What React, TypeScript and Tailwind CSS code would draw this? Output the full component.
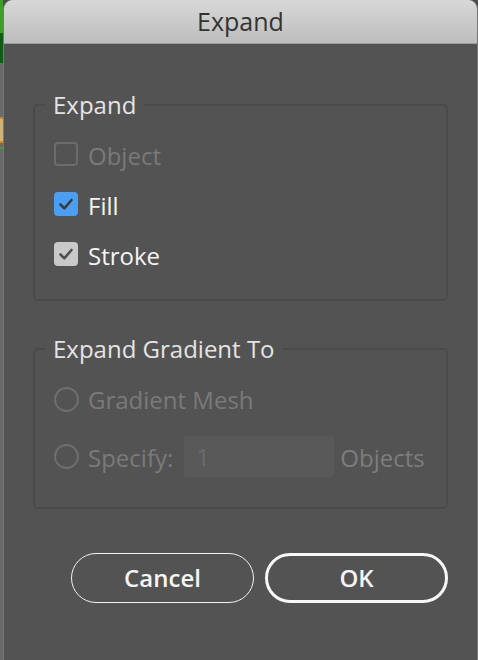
import React from 'react'

const font = { fontFamily: '"Open Sans", "Noto Sans", sans-serif' }

function CheckMark({ color }: { color: string }) {
  return (
    <svg viewBox="0 0 24 24" className="h-[24px] w-[24px]">
      <path d="M6.5 12.5l3.8 3.8 7.2-8.3" fill="none" stroke={color} strokeWidth="2.6" strokeLinecap="round" strokeLinejoin="round" />
    </svg>
  )
}

function CheckRow({ label, state }: { label: string; state: 'disabled' | 'blue' | 'gray' }) {
  return (
    <div className="flex h-[24px] items-center gap-[10px]">
      {state === 'disabled' && (
        <div className="h-[24px] w-[24px] rounded-[4px] border-2 border-[#6c6c6c]" />
      )}
      {state === 'blue' && (
        <div className="h-[24px] w-[24px] rounded-[4px] bg-[#4b9ff3]">
          <CheckMark color="#3b3b3b" />
        </div>
      )}
      {state === 'gray' && (
        <div className="h-[24px] w-[24px] rounded-[4px] bg-[#c9c9c9]">
          <CheckMark color="#505050" />
        </div>
      )}
      <span className={`pt-[3px] text-[24px] font-medium leading-none ${state === 'disabled' ? 'text-[#7a7a7a]' : 'text-[#f4f4f4]'}`}>
        {label}
      </span>
    </div>
  )
}

function Radio() {
  return <div className="h-[25px] w-[25px] shrink-0 rounded-full border-2 border-[#6e6e6e]" />
}

export default function App() {
  return (
    <div className="flex h-[660px] w-[478px] overflow-hidden bg-[#4e4e4e]" style={font}>
      {/* desktop behind the dialog */}
      <div className="flex w-[3px] flex-col">
        <div className="h-[33px] bg-[#3f9e2a]" />
        <div className="h-[30px] bg-[#0e5c16]" />
        <div className="h-[54px] bg-[#6a6a6a]" />
        <div className="h-[2px] bg-[#d88a1c]" />
        <div className="h-[22px] bg-[#cfb277]" />
        <div className="h-[2px] bg-[#d88a1c]" />
        <div className="h-[4px] bg-[#6a6a6a]" />
        <div className="h-[2px] bg-[#4c9a2a]" />
        <div className="flex-1 bg-[#6a6a6a]" />
      </div>

      <div className="flex flex-1 flex-col overflow-hidden rounded-t-[9px] border-x border-[#777777]">
        <div className="flex h-[44px] shrink-0 items-center justify-center border-b border-[#9c9c9c] bg-gradient-to-b from-[#d8d8d8] to-[#bdbdbd]">
          <span className="text-[25px] text-[#333333]">Expand</span>
        </div>

        <div className="flex flex-1 flex-col bg-[#535353] px-[29px] pt-[47px]">
          <fieldset className="rounded-[5px] border-2 border-[#4a4a4a] pb-[33px] pl-[19px]">
            <legend className="-ml-[9px] px-[8px] text-[24px] font-medium leading-[28px] text-[#e4e4e4]">Expand</legend>
            <div className="mt-[23px] flex flex-col gap-[26px]">
              <CheckRow label="Object" state="disabled" />
              <CheckRow label="Fill" state="blue" />
              <CheckRow label="Stroke" state="gray" />
            </div>
          </fieldset>

          <fieldset className="mt-[34px] rounded-[5px] border-2 border-[#4a4a4a] pb-[30px] pl-[19px]">
            <legend className="-ml-[9px] px-[8px] text-[24px] font-medium leading-[28px] text-[#e4e4e4]">Expand Gradient To</legend>
            <div className="mt-[22px] flex flex-col gap-[23px]">
              <div className="flex h-[28px] items-center gap-[9px]">
                <Radio />
                <span className="pt-[2px] text-[24px] font-medium leading-none text-[#7a7a7a]">Gradient Mesh</span>
              </div>
              <div className="flex h-[41px] items-center gap-[9px]">
                <Radio />
                <span className="pt-[2px] text-[24px] font-medium leading-none text-[#7a7a7a]">Specify:</span>
                <div className="ml-[2px] flex h-[41px] w-[150px] items-center rounded-[4px] bg-[#595959] pl-[12px] text-[24px] font-medium text-[#6c6c6c]">
                  1
                </div>
                <span className="ml-[-3px] pt-[2px] text-[24px] font-medium leading-none text-[#7d7d7d]">Objects</span>
              </div>
            </div>
          </fieldset>

          <div className="mt-[44px] flex justify-end gap-[11px]">
            <button className="h-[50px] w-[183px] rounded-full border-[1.5px] border-[#f2f2f2] text-[24px] font-semibold text-[#f4f4f4]">
              Cancel
            </button>
            <button className="h-[50px] w-[183px] rounded-full border-[3px] border-[#f7f7f7] text-[24px] font-semibold text-[#f4f4f4]">
              OK
            </button>
          </div>
        </div>
      </div>
    </div>
  )
}
